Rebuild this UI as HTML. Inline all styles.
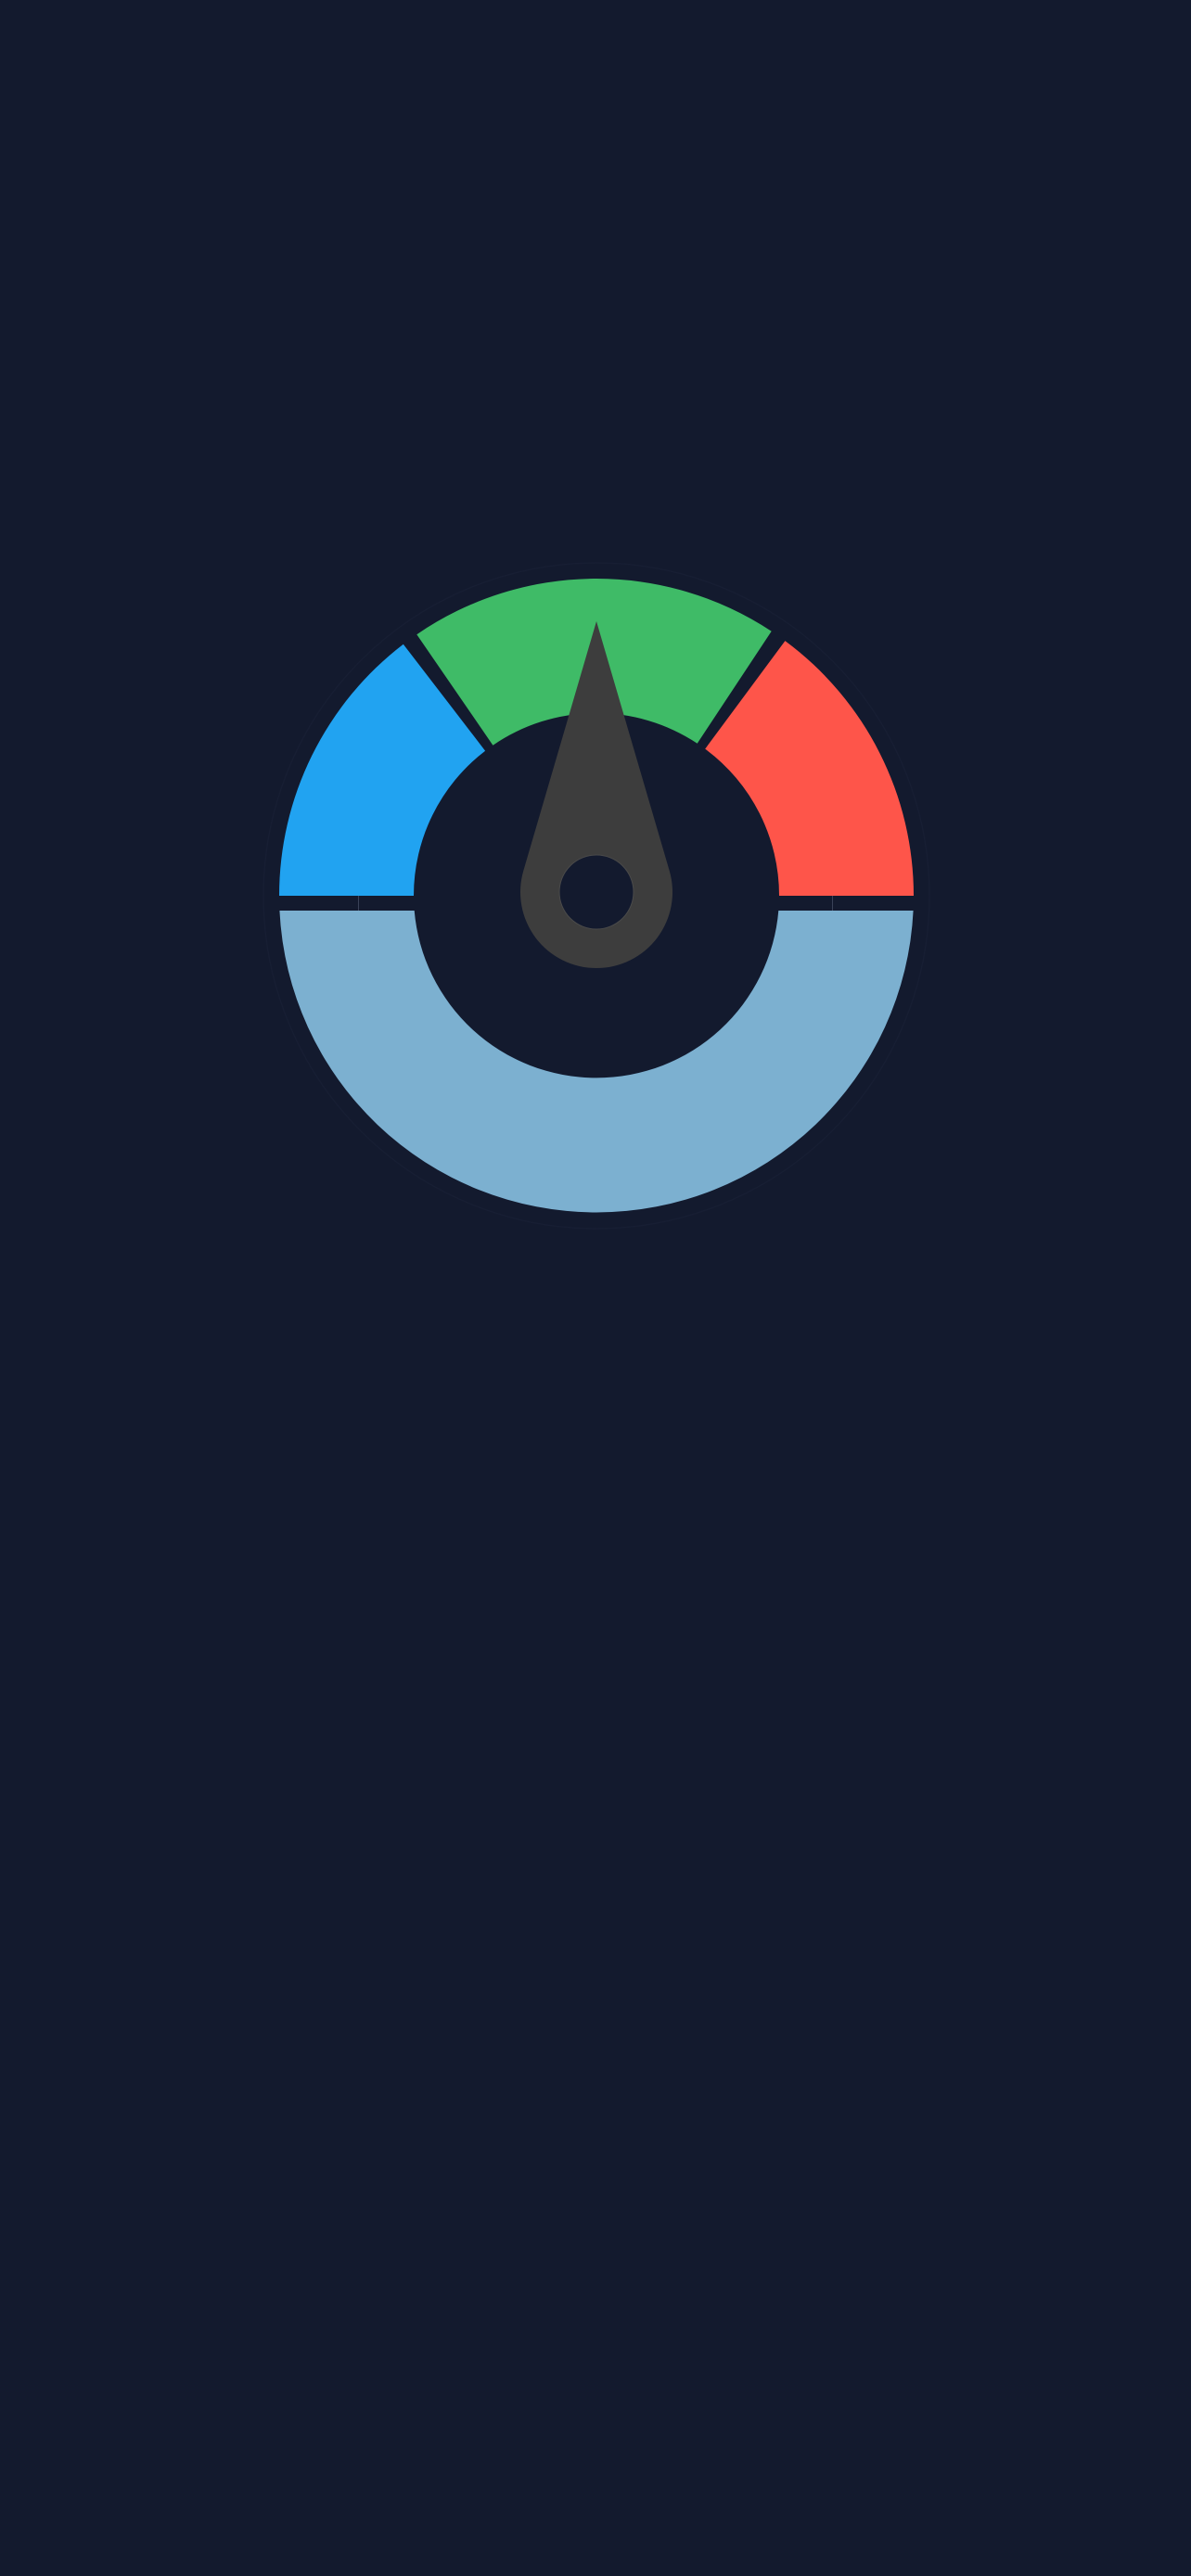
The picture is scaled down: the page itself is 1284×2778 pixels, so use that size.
<!DOCTYPE html>
<html><head><meta charset="utf-8"><style>
html,body{margin:0;padding:0;background:#131a2e;}
body{width:1284px;height:2778px;overflow:hidden;}
svg{display:block}
</style></head><body>
<svg width="1284" height="2778" viewBox="0 0 1284 2778" xmlns="http://www.w3.org/2000/svg">
<rect width="1284" height="2778" fill="#131a2e"/>
<circle cx="643" cy="966" r="359" fill="none" stroke="#171e33" stroke-width="1.5"/>
<path d="M301 966 A342 342 0 0 1 434.8 694.7 L523.1 809.7 A197 197 0 0 0 446 966 Z" fill="#21a3f1"/>
<path d="M449.3 684.2 A342 342 0 0 1 831.7 680.8 L751.7 801.7 A197 197 0 0 0 531.4 803.7 Z" fill="#3fbb67"/>
<path d="M846.4 691.1 A342 342 0 0 1 985 966 L840 966 A197 197 0 0 0 760.2 807.6 Z" fill="#fe554a"/>
<path d="M301.4 982 A342 342 0 0 0 984.6 982 L839.3 982 A197 197 0 0 1 446.7 982 Z" fill="#7cb0d0"/>
<line x1="386.5" y1="966" x2="386.5" y2="982" stroke="#3a4258" stroke-width="1"/>
<line x1="897.5" y1="966" x2="897.5" y2="982" stroke="#3a4258" stroke-width="1"/>
<path d="M643 670 L721.7 939 A82 82 0 1 1 564.3 939 Z" fill="#3d3d3d"/>
<circle cx="643" cy="962" r="40" fill="#131a2e" stroke="#4a4a4a" stroke-width="1"/>
</svg>
</body></html>
